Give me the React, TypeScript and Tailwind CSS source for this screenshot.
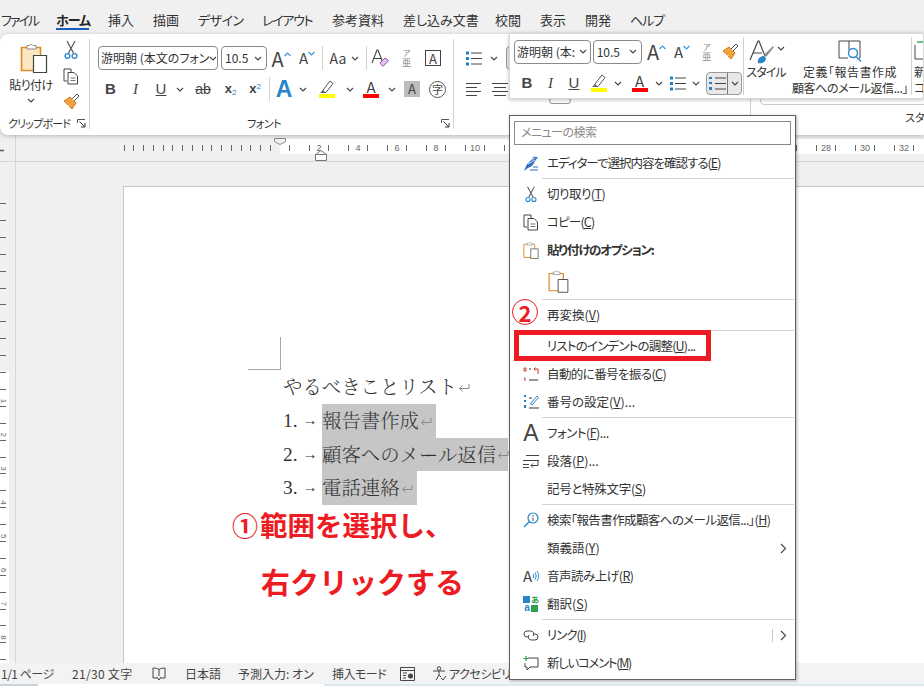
import React from "react";

const Chev = ({ className = "" }: { className?: string }) => (
  <svg width="8" height="5" viewBox="0 0 8 5" className={className}>
    <path d="M1 1l3 3 3-3" fill="none" stroke="#444" strokeWidth="1.1" />
  </svg>
);

const PasteIcon = ({ w = 28, h = 31, fill = "#fbe6c2" }: { w?: number; h?: number; fill?: string }) => (
  <svg width={w} height={h} viewBox="0 0 28 31">
    <path d="M1.5 5.5h19v23h-19z" fill={fill} stroke="#dd8a24" strokeWidth="1.6" />
    <path d="M7 7V3.5h2.5a2 2 0 0 1 3.5 0H16V7z" fill="#fff" stroke="#8a8a8a" />
    <path d="M13.5 13.5h13v17h-13z" fill="#fff" stroke="#444" strokeWidth="1.2" />
  </svg>
);

const Scissors = ({ s = 20 }: { s?: number }) => (
  <svg width={s * 0.7} height={s} viewBox="0 0 14 20">
    <path d="M3 1l6.5 12M11 1L4.5 13" stroke="#555" strokeWidth="1.2" fill="none" />
    <circle cx="3.5" cy="16" r="2.4" fill="none" stroke="#2a86c8" strokeWidth="1.3" />
    <circle cx="10.5" cy="16" r="2.4" fill="none" stroke="#2a86c8" strokeWidth="1.3" />
  </svg>
);

const CopyIcon = () => (
  <svg width="17" height="17" viewBox="0 0 17 17">
    <path d="M4 13H1V1h7v3" fill="none" stroke="#444" />
    <path d="M5 4.5h6l3.5 3.5v8H5z" fill="#fff" stroke="#444" />
    <path d="M7.5 10h5M7.5 12.5h5" stroke="#777" />
  </svg>
);

const Painter = ({ s = 17 }: { s?: number }) => (
  <svg width={s} height={s} viewBox="0 0 17 17">
    <path d="M7 4l6 6-4 6-8-8z" fill="#f2a23c" stroke="#d9771a" />
    <path d="M9 6l5-5 2 2-5 5" fill="#fff" stroke="#555" />
    <path d="M3 10l-1 2M6 12l-1 3" stroke="#fff" />
  </svg>
);

const Launcher = () => (
  <svg width="9" height="9" viewBox="0 0 9 9">
    <path d="M.5 4V.5H8" fill="none" stroke="#555" />
    <path d="M2.5 2.5L7.5 7.5M8 4v4H4" fill="none" stroke="#333" />
  </svg>
);

const Caret = ({ up }: { up?: boolean }) => (
  <svg width="7" height="5" viewBox="0 0 7 5" className={up ? "mb-[12px]" : "mb-[11px] rotate-180"}>
    <path d="M.5 4L3.5 1l3 3" fill="none" stroke="#3a96dd" strokeWidth="1.2" />
  </svg>
);

const GrowFont = () => (
  <div className="flex items-end justify-center">
    <span className="text-[20px] leading-[21px] text-[#444]">A</span>
    <Caret up />
  </div>
);

const ShrinkFont = () => (
  <div className="flex items-end justify-center">
    <span className="text-[15px] leading-[18px] text-[#444]">A</span>
    <Caret />
  </div>
);

const ClearFormat = () => (
  <svg width="18" height="18" viewBox="0 0 18 18">
    <path d="M1 14L6 1h1l5 13M3 9.5h7" fill="none" stroke="#444" strokeWidth="1.1" />
    <path d="M9 14l5-5 3.5 2.5-5 5.5h-1z" fill="#e4c5ec" stroke="#9b4fb0" />
  </svg>
);

const Phonetic = () => (
  <div className="flex flex-col items-center text-[#8a8a8a]">
    <span className="text-[8px] leading-[10px]">ア</span>
    <span className="text-[9px] leading-[10px]">亜</span>
  </div>
);

const BoxA = () => (
  <div className="w-[16px] h-[16px] border border-[#444] flex items-center justify-center text-[13px] leading-none text-[#444]">
    A
  </div>
);

const Highlighter = () => (
  <div className="flex flex-col items-center">
    <svg width="16" height="14" viewBox="0 0 16 14">
      <path d="M4 10l7-9 3 2.5-7 9H4z" fill="#fff" stroke="#555" />
      <path d="M1 13h4l1-1-2-2z" fill="#666" />
    </svg>
    <div className="w-[16px] h-[4px] bg-[#ffff00]" />
  </div>
);

const FontColor = () => (
  <div className="flex flex-col items-center">
    <span className="text-[15px] leading-[14px] text-[#444]">A</span>
    <div className="w-[16px] h-[4px] bg-[#ff0000]" />
  </div>
);

const BulletIcon = () => (
  <svg width="16" height="15" viewBox="0 0 16 15">
    <path d="M0 .5h3v3H0zM0 6h3v3H0zM0 11.5h3v3H0z" fill="#1f7fc4" />
    <path d="M5 2h11M5 7.5h11M5 13h11" stroke="#444" />
  </svg>
);

const AlignIcon = ({ center }: { center?: boolean }) => (
  <svg width="16" height="13" viewBox="0 0 16 13">
    {center ? (
      <path d="M0 .5h16M2 4.5h12M0 8.5h16M2 12.5h12" stroke="#444" />
    ) : (
      <path d="M0 .5h15M0 4.5h11M0 8.5h15M0 12.5h11" stroke="#444" />
    )}
  </svg>
);

const NumberList = () => (
  <svg width="17" height="15" viewBox="0 0 17 15">
    <path d="M0 1h3v2H0zM0 6h3v2H0zM0 11h3v3H0z" fill="#1f7fc4" />
    <path d="M6 2h11M6 7.5h11M6 13h11" stroke="#444" />
  </svg>
);

const Vsep = ({ className = "" }: { className?: string }) => (
  <div className={"w-px bg-[#d2d2d2] " + className} />
);

const TabBar = () => (
  <div className="h-[34px] flex items-start pt-[11px] text-[13px] leading-[18px] text-[#333] whitespace-nowrap shrink-0">
    <span className="w-[56px] pl-px tracking-[-2px]">ファイル</span>
    <div className="w-[52px] relative">
      <span className="font-bold text-[#262626] tracking-[-1px]">ホーム</span>
      <div className="absolute left-0 top-[17px] w-[33px] h-[2px] bg-[#185abd]" />
    </div>
    <span className="w-[45px]">挿入</span>
    <span className="w-[45px]">描画</span>
    <span className="w-[64px] tracking-[-0.5px]">デザイン</span>
    <span className="w-[70px] tracking-[-1.3px]">レイアウト</span>
    <span className="w-[71px]">参考資料</span>
    <span className="w-[92px]">差し込み文書</span>
    <span className="w-[45px]">校閲</span>
    <span className="w-[45px]">表示</span>
    <span className="w-[45px]">開発</span>
    <span className="tracking-[-1px]">ヘルプ</span>
  </div>
);

const Ribbon = () => (
  <div className="h-[101px] shrink-0 bg-white rounded-l-lg shadow-[0_1px_4px_rgba(0,0,0,0.25)] flex relative z-10">
    <div className="w-[89px] shrink-0 flex flex-col">
      <div className="h-[78px] flex">
        <div className="w-[60px] flex flex-col items-center pt-[8px] pl-[8px]">
          <PasteIcon />
          <span className="text-[12px] leading-[16px] mt-[4px] -ml-[6px] text-[#333] whitespace-nowrap tracking-[-0.5px]">貼り付け</span>
          <Chev className="mt-[5px] -ml-[6px]" />
        </div>
        <div className="w-[22px] flex flex-col items-center pt-[6px] gap-[8px]">
          <Scissors />
          <CopyIcon />
          <Painter />
        </div>
      </div>
      <div className="h-[23px] flex items-center pl-[8px] justify-between pr-[3px]">
        <span className="text-[11px] text-[#333] whitespace-nowrap tracking-[-0.8px]">クリップボード</span>
        <Launcher />
      </div>
    </div>
    <Vsep className="h-[90px] mt-[5px] shrink-0" />

    <div className="w-[363px] shrink-0 flex flex-col">
      <div className="h-[36px] pt-[12px] pl-[8px] flex items-center">
        <div className="w-[120px] h-[24px] border border-[#8a8a8a] rounded-[4px] flex items-center pl-[2px] pr-[4px] justify-between text-[12px] text-[#333] whitespace-nowrap">
          <span>游明朝 (本文のフォン</span>
          <Chev className="shrink-0" />
        </div>
        <div className="w-[46px] h-[24px] ml-[3px] border border-[#8a8a8a] rounded-[4px] flex items-center pl-[3px] pr-[4px] justify-between text-[12px] text-[#333]">
          <span>10.5</span>
          <Chev />
        </div>
        <div className="w-[26px] ml-px flex justify-center"><GrowFont /></div>
        <div className="w-[26px] flex justify-center"><ShrinkFont /></div>
        <Vsep className="h-[24px] ml-[2px]" />
        <div className="w-[43px] flex items-center justify-center gap-[5px] text-[14px] text-[#444]">
          <span>Aa</span>
          <Chev />
        </div>
        <Vsep className="h-[24px]" />
        <div className="w-[26px] flex justify-center"><ClearFormat /></div>
        <div className="w-[27px] flex justify-center"><Phonetic /></div>
        <div className="w-[26px] flex justify-center"><BoxA /></div>
      </div>
      <div className="h-[30px] mt-[4px] pl-[8px] flex items-center text-[#444]">
        <span className="w-[25px] text-center text-[15px] font-bold font-['Liberation_Sans',sans-serif]">B</span>
        <span className="w-[25px] text-center text-[15px] italic font-['Liberation_Serif',serif]">I</span>
        <span className="w-[26px] text-center text-[15px] underline font-['Liberation_Sans',sans-serif]">U</span>
        <div className="w-[12px] flex justify-center"><Chev /></div>
        <span className="w-[34px] text-center text-[14px] line-through font-['Liberation_Sans',sans-serif]">ab</span>
        <span className="w-[21px] text-center text-[13px] font-bold font-['Liberation_Sans',sans-serif]">
          x<sub className="text-[8px] text-[#2a86c8] font-normal">2</sub>
        </span>
        <span className="w-[28px] text-center text-[13px] font-bold font-['Liberation_Sans',sans-serif]">
          x<sup className="text-[8px] text-[#2a86c8] font-normal">2</sup>
        </span>
        <Vsep className="h-[24px]" />
        <span className="w-[28px] text-center text-[23px] leading-none font-bold text-[#2a86c8] font-['Liberation_Sans',sans-serif]">A</span>
        <div className="w-[10px] flex justify-center"><Chev /></div>
        <div className="w-[34px] ml-[2px] flex justify-center"><Highlighter /></div>
        <div className="w-[12px] flex justify-center"><Chev /></div>
        <div className="w-[30px] flex justify-center"><FontColor /></div>
        <div className="w-[12px] flex justify-center"><Chev /></div>
        <div className="w-[16px] h-[16px] ml-[6px] bg-[#bdbdbd] flex items-center justify-center text-[13px]">A</div>
        <div className="w-[17px] h-[17px] ml-[9px] rounded-full border border-[#555] flex items-center justify-center text-[11px] leading-none">字</div>
      </div>
      <div className="mt-[8px] h-[23px] flex items-center">
        <span className="ml-[157px] text-[11px] text-[#333] tracking-[-0.5px]">フォント</span>
        <div className="ml-auto mr-[3px] flex"><Launcher /></div>
      </div>
    </div>
    <Vsep className="h-[90px] mt-[5px] shrink-0" />

    <div className="w-[296px] shrink-0 flex flex-col pl-[12px]">
      <div className="h-[36px] pt-[12px] flex items-center">
        <BulletIcon />
        <Chev className="ml-[8px]" />
        <div className="w-[20px] h-[24px] ml-[8px] rounded-[4px] border border-[#9a9a9a] bg-[#e8e8e8]" />
      </div>
      <div className="h-[30px] mt-[4px] flex items-center gap-[10px]">
        <AlignIcon />
        <AlignIcon center />
        <div className="w-[22px] h-[6px] ml-[31px] -mt-[2px] self-end border border-[#9a9a9a] rounded-[4px]" />
      </div>
    </div>
    <Vsep className="h-[32px] mt-[63px] shrink-0" />

    <div className="flex-1 min-w-0 overflow-hidden flex flex-col pl-[9px]">
      <div className="h-[71px] border border-[#cfcfcf] rounded-[4px] -mr-[10px] shrink-0" />
      <div className="h-[22px] pt-[2px] flex items-center pl-[145px] text-[11px] text-[#333] whitespace-nowrap">スタ</div>
    </div>
  </div>
);

const rulerLeft = Array.from({ length: 16 }, (_, i) => 123.5 + i * 9.75);
const rulerRight = Array.from({ length: 33 }, (_, i) => 289 + i * 19.5);
const rulerNums = Array.from({ length: 16 }, (_, i) => ({ x: 319 + i * 39, n: (i + 1) * 2 }));

const HRuler = () => (
  <div className="h-[27px] shrink-0 border-b border-[#d6d6d6]">
    <svg width="924" height="26" className="block">
      <rect x="280" y="4" width="644" height="15" fill="#fff" />
      <path d="M15.5 0v26" stroke="#d6d6d6" />
      <path d="M0 15.5h4" stroke="#555" strokeWidth="1.5" />
      {rulerLeft.concat(rulerRight).map((x) => (
        <path key={x} d={`M${Math.round(x) + 0.5} 10v6`} stroke="#666" />
      ))}
      {rulerNums.map((r) => (
        <text key={r.n} x={r.x} y="16" fontSize="9" textAnchor="middle" fill="#666" fontFamily="Liberation Sans">
          {r.n}
        </text>
      ))}
      <path d="M274.5 3.5h11v3l-5.5 3-5.5-3z" fill="#f4f4f4" stroke="#888" />
      <path d="M315.5 19.5l5.5-4 5.5 4v6h-11zM315.5 19.5h11" fill="#fff" stroke="#777" />
    </svg>
  </div>
);

const vTicks = Array.from({ length: 29 }, (_, i) => 203 - 162 + i * 16.9);
const vNums = [1, 2, 3, 4, 5, 6, 7, 8];

const VRuler = () => (
  <div className="w-[16px] shrink-0 border-r border-[#d6d6d6]">
    <svg width="15" height="501" className="block">
      <rect x="0" y="209" width="9" height="292" fill="#fff" />
      {vTicks.map((y) => (
        <path key={y} d={`M0 ${Math.round(y) + 0.5}h6`} stroke="#666" />
      ))}
      {vNums.map((n) => (
        <text
          key={n}
          x="4"
          y={242 + (n - 1) * 33.8}
          fontSize="8"
          textAnchor="middle"
          fill="#666"
          fontFamily="Liberation Sans"
          transform={`rotate(90 4 ${239 + (n - 1) * 33.8})`}
        >
          {n}
        </text>
      ))}
    </svg>
  </div>
);

const ReturnMark = () => (
  <svg width="12" height="10" viewBox="0 0 12 10" className="shrink-0 ml-px mt-[2px]">
    <path d="M11 1v4.5H1.5M4.5 2.5l-3 3 3 3" fill="none" stroke="#8a8a8a" />
  </svg>
);

const items = [
  { n: "1.", label: "報告書作成", w: "w-[114px]" },
  { n: "2.", label: "顧客へのメール返信", w: "w-[186px]" },
  { n: "3.", label: "電話連絡", w: "w-[95px]" },
];

const Page = () => (
  <div className="flex-1 mt-[24px] bg-white border-l border-t border-[#c6c6c6]">
    <div className="ml-[124px] mt-[150px] w-[33px] h-[33px] border-r border-b border-[#a8a8a8]" />
    <div className="pl-[159px] font-['Noto_Serif_CJK_JP','Noto_Sans_CJK_JP',serif] font-light text-[19.4px] text-[#333]">
      <div className="h-[34px] flex items-center [font-feature-settings:normal]">
        やるべきことリスト
        <ReturnMark />
      </div>
      {items.map((it) => (
        <div key={it.n} className="h-[33.5px] flex items-center [font-feature-settings:normal]">
          <span className="w-[39px] flex items-center font-['Liberation_Serif',serif] whitespace-nowrap">
            {it.n}
            <span className="ml-[5px] text-[15px]">→</span>
          </span>
          <div className={it.w + " h-full bg-[#c6c6c6] flex items-center whitespace-nowrap"}>
            {it.label}
            <ReturnMark />
          </div>
        </div>
      ))}
    </div>
    <div className="text-[#ed1c24] font-bold [font-feature-settings:normal] whitespace-nowrap">
      <div className="ml-[108px] h-[40px] flex items-center text-[27.5px] leading-none">
        <span className="w-[28px] text-[26px]">①</span>範囲を選択し、
      </div>
      <div className="ml-[137px] mt-[17px] h-[40px] flex items-center text-[29px] leading-none">右クリックする</div>
    </div>
  </div>
);

const StatusBar = () => (
  <div className="h-[21px] shrink-0 bg-[#f3f3f3] flex items-center text-[12px] text-[#444] whitespace-nowrap overflow-hidden">
    <span className="w-[72px] pl-px tracking-[-0.5px]">1/1 ページ</span>
    <span className="w-[80px] tracking-[0.3px]">21/30 文字</span>
    <svg width="14" height="14" viewBox="0 0 14 14" className="mr-[19px]">
      <path d="M7 2.5C6 1.5 3 1 1 1v10h4M7 2.5C8 1.5 11 1 13 1v10H9M7 2.5V9" fill="none" stroke="#444" />
      <path d="M5 10l2 3 2-3" fill="none" stroke="#444" />
    </svg>
    <span className="w-[53px]">日本語</span>
    <span className="w-[94px]">予測入力: オン</span>
    <span className="w-[68px] tracking-[-0.5px]">挿入モード</span>
    <svg width="15" height="14" viewBox="0 0 15 14" className="mr-[17px]">
      <path d="M.5.5h14v13H.5zM.5 3.5h14M3 6h4M3 8.5h3M3 11h3" fill="none" stroke="#444" />
      <circle cx="10.5" cy="9" r="2.5" fill="#444" />
    </svg>
    <svg width="15" height="15" viewBox="0 0 15 15" className="mr-[2px]">
      <circle cx="7" cy="2.5" r="1.8" fill="none" stroke="#444" />
      <path d="M1 5h12M7 5v4l-3 5M7 9l2 2M9 12l2 2 3-4" fill="none" stroke="#444" />
    </svg>
    <span className="tracking-[-0.5px]">アクセシビリティ</span>
  </div>
);

const MiniToolbar = () => (
  <div className="absolute z-20 left-[509px] top-[33px] w-[415px] h-[66px] bg-white border border-[#d8d8d8] shadow-[0_1px_4px_rgba(0,0,0,0.25)] flex text-[#444]">
    <div className="w-[232px] shrink-0">
      <div className="h-[30px] pl-[4px] pt-[5px] flex items-center">
        <div className="w-[78px] h-[24px] border border-[#8a8a8a] rounded-[4px] flex items-center pl-[2px] pr-[3px] justify-between text-[12px] text-[#333] whitespace-nowrap">
          <span>游明朝 (本:</span>
          <Chev className="shrink-0" />
        </div>
        <div className="w-[50px] h-[24px] ml-[2px] border border-[#8a8a8a] rounded-[4px] flex items-center pl-[3px] pr-[4px] justify-between text-[12px] text-[#333]">
          <span>10.5</span>
          <Chev />
        </div>
        <div className="w-[26px] ml-[2px] flex justify-center"><GrowFont /></div>
        <div className="w-[26px] flex justify-center"><ShrinkFont /></div>
        <div className="w-[24px] flex justify-center"><Phonetic /></div>
        <div className="w-[24px] flex justify-center"><Painter /></div>
      </div>
      <div className="h-[30px] mt-[4px] pl-[4px] flex items-center">
        <span className="w-[24px] ml-px text-center text-[15px] font-bold font-['Liberation_Sans',sans-serif]">B</span>
        <span className="w-[23px] text-center text-[15px] italic font-['Liberation_Serif',serif]">I</span>
        <span className="w-[24px] text-center text-[15px] underline font-['Liberation_Sans',sans-serif]">U</span>
        <div className="w-[26px] flex justify-center"><Highlighter /></div>
        <div className="w-[12px] flex justify-center"><Chev /></div>
        <div className="w-[27px] ml-[2px] flex justify-center"><FontColor /></div>
        <div className="w-[12px] flex justify-center"><Chev /></div>
        <div className="w-[22px] ml-[2px] flex justify-center"><BulletIcon /></div>
        <div className="w-[14px] flex justify-center"><Chev /></div>
        <div className="w-[36px] h-[23px] ml-[3px] border border-[#9a9a9a] rounded-[4px] bg-[#e8e8e8] flex items-center">
          <div className="w-[21px] flex justify-center border-r border-[#777] h-full items-center"><NumberList /></div>
          <div className="flex-1 flex justify-center"><Chev /></div>
        </div>
      </div>
    </div>
    <Vsep className="h-[58px] mt-[3px] ml-px shrink-0" />
    <div className="w-[44px] shrink-0 flex flex-col items-center pt-[6px]">
      <div className="flex items-start">
        <svg width="28" height="24" viewBox="0 0 28 24">
          <path d="M2 20L10 1h1l6 15M5 13h9" fill="none" stroke="#444" strokeWidth="1.2" />
          <path d="M10 23c-1-4 2-7 6-7l2 2c0 4-4 6-8 5z" fill="#2a86c8" />
          <path d="M16 15l9-9 1 1-8 10z" fill="#8a8a8a" />
        </svg>
        <Chev className="mt-[6px] ml-[1px]" />
      </div>
      <span className="text-[12px] leading-[16px] text-[#333] whitespace-nowrap tracking-[-1px]">スタイル</span>
    </div>
    <div className="w-[114px] shrink-0 ml-[5px] flex flex-col items-center pt-[5px] text-[12px] text-[#333] whitespace-nowrap leading-[16px]">
      <svg width="24" height="24" viewBox="0 0 24 24">
        <path d="M11 2H1v17h9M11 2h11v17h-1M11 2v9" fill="none" stroke="#444" />
        <circle cx="15" cy="14" r="4.5" fill="#fff" stroke="#2a86c8" strokeWidth="1.4" />
        <path d="M18 17.5l5 5" stroke="#2a86c8" strokeWidth="1.4" />
      </svg>
      <span className="mt-px tracking-[0.5px]">定義「報告書作成</span>
      <span className="tracking-[-0.4px]">顧客へのメール返信...」</span>
    </div>
    <Vsep className="h-[58px] mt-[3px] ml-[4px] shrink-0" />
    <div className="flex-1 pl-[2px] pt-[5px] text-[12px] leading-[16px] text-[#333] overflow-hidden whitespace-nowrap">
      <svg width="12" height="24" viewBox="0 0 12 24">
        <path d="M1 6v14h11" fill="none" stroke="#444" />
        <path d="M3 3h9" stroke="#3aa655" strokeWidth="1.5" />
      </svg>
      <div className="mt-px">新</div>
      <div>コ</div>
    </div>
  </div>
);

const Sep = () => (
  <div className="h-[3px] flex items-center pl-[32px] pr-px">
    <div className="h-px w-full bg-[#d2d2d2]" />
  </div>
);

const Row = ({
  icon,
  pre,
  k,
  post = ")",
  right,
  tr = "",
}: {
  icon?: React.ReactNode;
  pre: string;
  k: string;
  post?: string;
  right?: React.ReactNode;
  tr?: string;
}) => (
  <div className="flex items-center h-[28px]">
    <div className="w-[37px] shrink-0 flex justify-center pl-[5px]">{icon}</div>
    <span className={"text-[12.5px] text-[#333] whitespace-nowrap " + tr}>
      {pre}
      <u>{k}</u>
      {post}
    </span>
    {right}
  </div>
);

const MenuChev = () => (
  <svg width="7" height="11" viewBox="0 0 7 11">
    <path d="M1 1l4.5 4.5L1 10" fill="none" stroke="#444" strokeWidth="1.1" />
  </svg>
);

const ContextMenu = () => (
  <div className="absolute z-20 left-[509px] top-[115px] w-[287px] h-[565px] bg-white border border-[#5f5f5f] shadow-[1px_1px_3px_rgba(0,0,0,0.3)] flex flex-col">
    <div className="mx-[4px] mt-[5px] h-[24px] border border-[#8a8a8a] flex items-center pl-[6px] pb-[2px] text-[12px] text-[#8a8a8a] shrink-0 tracking-[-0.5px]">
      メニューの検索
    </div>
    <div className="h-[4px] shrink-0" />
    <Row
      pre="エディターで選択内容を確認する("
      k="E"
      tr="tracking-[-1px]"
      icon={
        <svg width="16" height="17" viewBox="0 0 16 17">
          <path d="M1 16l2.5-6L11 1.5l4 1-1.5 1.5L9 11l-4 2z" fill="#2f6fc2" />
          <path d="M6 6l6-3M5 9l7-4" stroke="#fff" strokeWidth=".8" />
          <path d="M7 15h8M10 12h5" stroke="#2f6fc2" strokeWidth="1.2" />
        </svg>
      }
    />
    <Sep />
    <Row pre="切り取り(" k="T" tr="tracking-[-0.5px]" icon={<Scissors s={17} />} />
    <Row pre="コピー(" k="C" tr="tracking-[-0.8px]" icon={<CopyIcon />} />
    <div className="h-[28px] flex items-center">
      <div className="w-[37px] shrink-0 flex justify-center pl-[5px]"><PasteIcon w={16} h={18} fill="#fff" /></div>
      <span className="text-[12.5px] font-bold text-[#333] whitespace-nowrap tracking-[-1.2px]">貼り付けのオプション:</span>
    </div>
    <div className="h-[34px] pl-[38px] flex items-center">
      <PasteIcon w={21} h={24} fill="#fff" />
    </div>
    <Sep />
    <Row pre="再変換(" k="V" />
    <Sep />
    <Row pre="リストのインデントの調整(" k="U" post=")..." tr="tracking-[-0.8px]" />
    <Row
      pre="自動的に番号を振る("
      k="C"
      tr="tracking-[-0.6px]"
      icon={
        <svg width="16" height="15" viewBox="0 0 16 15">
          <path d="M1 1h2v3H1zM1 11h1v3" fill="none" stroke="#d13438" />
          <path d="M6 2h2M6 13h9" stroke="#333" />
          <path d="M15 7V2h-4M12.5.5L11 2l1.5 1.5" fill="none" stroke="#d13438" />
        </svg>
      }
    />
    <Row
      pre="番号の設定("
      k="V"
      post=")..."
      icon={
        <svg width="16" height="16" viewBox="0 0 16 16">
          <path d="M1 1h2v2H1zM1 6h2v2H1zM1 11h2v3H1z" fill="#1f7fc4" />
          <path d="M6 4h3M6 14h10" stroke="#333" />
          <path d="M8 9l6-7 1.5 1.5-6 7H8z" fill="#fff" stroke="#2a86c8" />
        </svg>
      }
    />
    <Sep />
    <Row
      pre="フォント("
      k="F"
      post=")..."
      tr="tracking-[-0.5px]"
      icon={<span className="text-[23px] leading-[22px] text-[#444] font-['Liberation_Sans',sans-serif]">A</span>}
    />
    <Row
      pre="段落("
      k="P"
      post=")..."
      icon={
        <svg width="16" height="13" viewBox="0 0 16 13">
          <path d="M3 .5h13M0 5.5h16M0 9.5h6M0 12.5h6" stroke="#444" />
          <path d="M15 5.5v5H8M10 8.5l-2 2 2 2" fill="none" stroke="#444" />
        </svg>
      }
    />
    <Row pre="記号と特殊文字(" k="S" tr="tracking-[-0.3px]" />
    <Sep />
    <Row
      pre="検索「報告書作成顧客へのメール返信...」("
      k="H"
      tr="tracking-[-0.6px]"
      icon={
        <svg width="16" height="16" viewBox="0 0 16 16">
          <circle cx="10" cy="6" r="5" fill="none" stroke="#2a86c8" strokeWidth="1.2" />
          <path d="M6.5 9.5L1 15" stroke="#2a86c8" strokeWidth="1.5" />
          <path d="M10 5.5V9M10 3v1.5" stroke="#555" />
        </svg>
      }
    />
    <Row pre="類義語(" k="Y" right={<div className="ml-auto mr-[8px] flex"><MenuChev /></div>} />
    <Row
      pre="音声読み上げ("
      k="R"
      tr="tracking-[-0.5px]"
      icon={
        <div className="flex items-end">
          <span className="text-[15px] leading-[14px] text-[#444]">A</span>
          <svg width="7" height="13" viewBox="0 0 7 13">
            <path d="M1 4c1 1 1 3 0 4M3 2.5c1.5 2 1.5 5 0 7M5 1c2 3 2 7 0 10" fill="none" stroke="#2a86c8" />
          </svg>
        </div>
      }
    />
    <Row
      pre="翻訳("
      k="S"
      icon={
        <div className="grid grid-cols-2 w-[16px] h-[16px] text-[8px] leading-[8px] font-bold text-center">
          <div className="bg-[#2a86c8] h-[7px] w-[7px]" />
          <div className="text-[#2e9e4f]">あ</div>
          <div className="text-[#2a86c8] font-['Liberation_Sans',sans-serif] text-[10px]">a</div>
          <div className="bg-[#2e9e4f] h-[7px] w-[7px] mt-px" />
        </div>
      }
    />
    <Sep />
    <Row
      pre="リンク("
      k="I"
      tr="tracking-[-1px]"
      icon={
        <svg width="16" height="11" viewBox="0 0 16 11">
          <path d="M6 7H4a3 3 0 0 1 0-6h4a3 3 0 0 1 2 5" fill="none" stroke="#444" />
          <path d="M10 4h2a3 3 0 0 1 0 6H8a3 3 0 0 1-2-5" fill="none" stroke="#444" />
        </svg>
      }
      right={
        <div className="ml-auto mr-[8px] flex items-center gap-[7px]">
          <div className="w-px h-[13px] bg-[#c8c8c8]" />
          <MenuChev />
        </div>
      }
    />
    <Row
      pre="新しいコメント("
      k="M"
      tr="tracking-[-1.3px]"
      icon={
        <svg width="16" height="16" viewBox="0 0 16 16">
          <path d="M5 3h10v9H7l-3 3v-3H2V8" fill="none" stroke="#444" />
          <path d="M3 1v5M.5 3.5h5" stroke="#2e9e4f" strokeWidth="1.2" />
        </svg>
      }
    />
  </div>
);

export default function App() {
  return (
    <div className="relative w-[924px] h-[686px] overflow-hidden bg-[#f0f0f0] flex flex-col font-['Noto_Sans_CJK_JP',sans-serif] [font-feature-settings:'palt']">
      <TabBar />
      <Ribbon />
      <HRuler />
      <div className="flex-1 flex min-h-0">
        <VRuler />
        <div className="w-[107px] shrink-0" />
        <Page />
      </div>
      <StatusBar />
      <div className="h-[2px] shrink-0 flex">
        <div className="w-[38px] bg-[#c9d3da]" />
        <div className="w-[286px] bg-white" />
        <div className="flex-1 bg-[#dbe8f0]" />
      </div>

      <MiniToolbar />
      <ContextMenu />

      <div className="absolute z-30 left-[512px] top-[299px] w-[26px] h-[26px] rounded-full bg-white border border-[#ed1c24] flex items-center justify-center text-[#ed1c24] text-[22px] leading-none font-bold [font-feature-settings:normal]">
        2
      </div>
      <div className="absolute z-30 left-[514px] top-[330px] w-[197px] h-[31px] border-[5px] border-[#ed1c24]" />
    </div>
  );
}
